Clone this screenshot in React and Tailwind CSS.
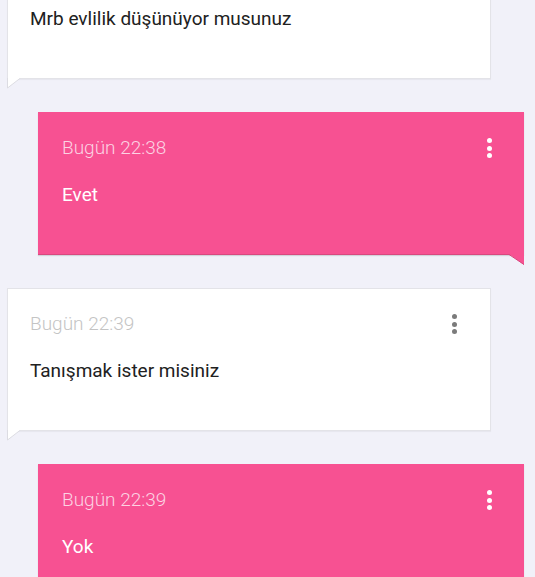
import React from 'react';

const messages = [
  { id: 1, mine: false, time: 'Bugün 22:37', text: 'Mrb evlilik düşünüyor musunuz' },
  { id: 2, mine: true, time: 'Bugün 22:38', text: 'Evet' },
  { id: 3, mine: false, time: 'Bugün 22:39', text: 'Tanışmak ister misiniz' },
  { id: 4, mine: true, time: 'Bugün 22:39', text: 'Yok' },
];

const Dots = ({ mine }) => (
  <div className="flex flex-col items-center gap-[2.5px]">
    {[0, 1, 2].map((i) => (
      <span
        key={i}
        className={`block h-[5px] w-[5px] rounded-full ${mine ? 'bg-white' : 'bg-[#7b7b7b]'}`}
      />
    ))}
  </div>
);

const Bubble = ({ mine, time, text }) => {
  return (
    <div className={mine ? 'ml-[38px] w-[486px]' : 'ml-[7px] w-[484px]'}>
      <div
        className={`relative h-[143px] pt-6 ${
          mine
            ? 'px-6 bg-[#f75192] border-b border-[#d9487f] shadow-[0_1px_1px_rgba(0,0,0,0.12)]'
            : 'pl-[22px] pr-6 bg-white border border-[#e3e3e8] shadow-[0_1px_1px_rgba(0,0,0,0.04)]'
        }`}
      >
        <div className={`flex h-6 items-center justify-between ${mine ? '' : '-mt-px'}`}>
          <span
            className={`text-[19px] font-light leading-6 ${mine ? 'text-[#fcd3e3]' : 'text-[#c4c4c4]'}`}
          >
            {time}
          </span>
          <div className={mine ? 'mr-[8px]' : 'mr-[9px]'}>
            <Dots mine={mine} />
          </div>
        </div>
        <p
          className={`mt-[23px] text-[19px] leading-6 ${mine ? 'text-white' : 'text-[#212121]'}`}
        >
          {text}
        </p>
        {mine ? (
          <svg className="absolute right-0 top-full" width="15" height="11" viewBox="0 0 15 11">
            <path d="M0 0 L15 0 L15 11 Z" fill="#f75192" />
            <path d="M0 0.5 L15 10.5" stroke="#d9487f" strokeWidth="1" />
          </svg>
        ) : (
          <svg className="absolute -left-px top-full" width="15" height="11" viewBox="0 0 15 11">
            <path d="M0.5 -1 L0.5 10 L13.5 0 Z" fill="#ffffff" />
            <path d="M0.5 -1 L0.5 10 L13.5 0" stroke="#dcdce2" strokeWidth="1" fill="none" />
          </svg>
        )}
      </div>
    </div>
  );
};

export default function App() {
  return (
    <div
      className="h-[577px] w-full overflow-hidden bg-[#f1f1f9]"
      style={{ fontFamily: 'Roboto, "Noto Sans", sans-serif' }}
    >
      <div className="-mt-[64px] flex flex-col gap-[33px]">
        {messages.map((m) => (
          <Bubble key={m.id} {...m} />
        ))}
      </div>
    </div>
  );
}
